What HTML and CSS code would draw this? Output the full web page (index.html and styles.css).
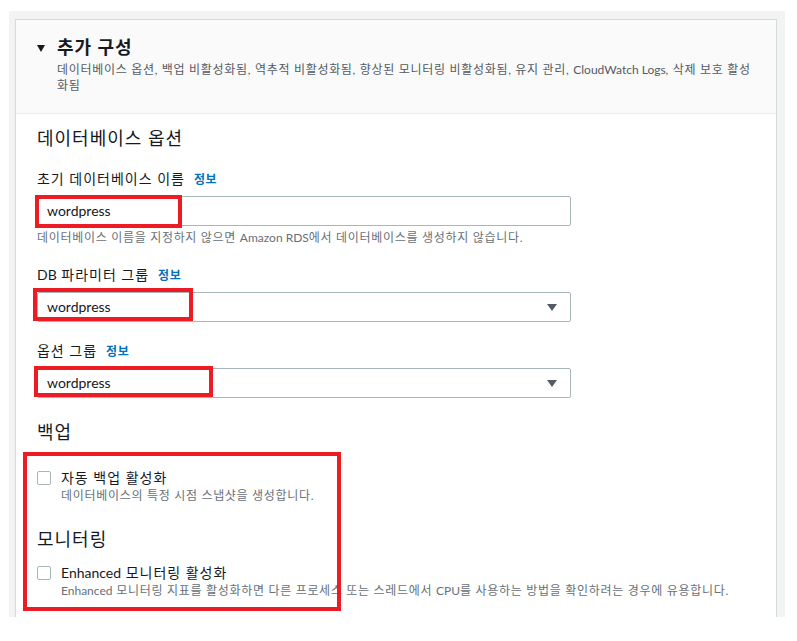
FILE: index.html
```html
<!DOCTYPE html>
<html lang="ko">
<head>
<meta charset="utf-8">
<title>추가 구성</title>
<link rel="stylesheet" href="styles.css">
</head>
<body>
<div class="outer">
  <div class="card">
    <div class="card-header">
      <div class="title-row">
        <span class="caret-down"></span>
        <h2 class="title">추가 구성</h2>
      </div>
      <p class="subtitle">데이터베이스 옵션, 백업 비활성화됨, 역추적 비활성화됨, 향상된 모니터링 비활성화됨, 유지 관리, <span class="en">CloudWatch Logs</span>, 삭제 보호 활성화됨</p>
    </div>
    <div class="card-body">
      <h3 class="section-title">데이터베이스 옵션</h3>

      <div class="field">
        <div class="label">초기 데이터베이스 이름 <a class="info">정보</a></div>
        <div class="control"><span class="en">wordpress</span></div>
        <div class="hint">데이터베이스 이름을 지정하지 않으면 <span class="en">Amazon RDS</span>에서 데이터베이스를 생성하지 않습니다.</div>
      </div>

      <div class="field">
        <div class="label"><span><span class="en">DB</span> 파라미터 그룹</span> <a class="info">정보</a></div>
        <div class="control select"><span class="en">wordpress</span><span class="select-caret"></span></div>
      </div>

      <div class="field">
        <div class="label">옵션 그룹 <a class="info">정보</a></div>
        <div class="control select"><span class="en">wordpress</span><span class="select-caret"></span></div>
      </div>

      <h3 class="section-title backup">백업</h3>
      <div class="check-row">
        <span class="checkbox"></span>
        <div>
          <div class="check-label">자동 백업 활성화</div>
          <div class="hint">데이터베이스의 특정 시점 스냅샷을 생성합니다.</div>
        </div>
      </div>

      <h3 class="section-title monitoring">모니터링</h3>
      <div class="check-row tight">
        <span class="checkbox"></span>
        <div>
          <div class="check-label"><span class="en">Enhanced</span> 모니터링 활성화</div>
          <div class="hint"><span class="en">Enhanced</span> 모니터링 지표를 활성화하면 다른 프로세스 또는 스레드에서 <span class="en">CPU</span>를 사용하는 방법을 확인하려는 경우에 유용합니다.</div>
        </div>
      </div>
    </div>
  </div>
</div>

<div class="mark mark-1"></div>
<div class="mark mark-2"></div>
<div class="mark mark-3"></div>
<div class="mark mark-4"></div>
</body>
</html>
```
FILE: styles.css
```css
* { box-sizing: border-box; }

html, body {
  margin: 0;
  padding: 0;
  background: #ffffff;
}

body {
  position: relative;
  font-family: "Lato", "Noto Sans CJK KR", sans-serif;
  color: #16191f;
  width: 797px;
  height: 641px;
  overflow: hidden;
  letter-spacing: 0.062em;
}

.en {
  letter-spacing: 0;
}

.outer {
  margin: 11px 0 0 9px;
  width: 776px;
  height: 606px;
  background: #f2f3f3;
  padding: 8px 8px 0 6px;
  overflow: hidden;
}

.card {
  background: #ffffff;
  border: 1px solid #d5dbdb;
  border-bottom: none;
  height: 640px;
}

.card-header {
  background: #fafafa;
  border-bottom: 1px solid #eaeded;
  padding: 15px 20px 19px 21px;
}

.title-row {
  display: flex;
  align-items: center;
  gap: 12px;
}

.caret-down {
  width: 0;
  height: 0;
  border-left: 4.5px solid transparent;
  border-right: 4.5px solid transparent;
  border-top: 7px solid #16191f;
  margin-top: 2px;
}

.title {
  margin: 0;
  font-size: 18px;
  line-height: 24px;
  font-weight: 700;
  letter-spacing: 0.055em;
}

.subtitle {
  margin: 3px 0 0 20px;
  font-size: 12px;
  line-height: 16px;
  color: #545b64;
  letter-spacing: 0.058em;
}

.card-body {
  padding: 12px 20px 0 21px;
}

.section-title {
  margin: 0;
  font-size: 18px;
  line-height: 24px;
  font-weight: 400;
}

.field {
  margin-top: 19px;
}

.label {
  font-size: 14px;
  line-height: 20px;
  display: flex;
  align-items: baseline;
  gap: 9px;
}

.info {
  color: #0073bb;
  font-size: 12px;
  font-weight: 700;
  letter-spacing: 0.058em;
}

.control {
  margin-top: 6px;
  width: 534px;
  height: 30px;
  border: 1px solid #aab7b8;
  border-radius: 2px;
  padding: 0 9px;
  font-size: 14px;
  line-height: 28px;
  display: flex;
  align-items: center;
  justify-content: space-between;
}

.select-caret {
  width: 0;
  height: 0;
  border-left: 5px solid transparent;
  border-right: 5px solid transparent;
  border-top: 7px solid #545b64;
  margin-right: 4px;
}

.hint {
  margin-top: 4px;
  font-size: 12px;
  line-height: 16px;
  color: #687078;
  letter-spacing: 0.058em;
}

.check-row .hint {
  margin-top: 0;
}

.section-title.backup {
  margin-top: 22px;
}

.section-title.monitoring {
  margin-top: 23px;
}

.check-row {
  display: flex;
  align-items: flex-start;
  gap: 10px;
  margin-top: 24px;
}

.check-row.tight {
  margin-top: 12px;
}

.checkbox {
  width: 14px;
  height: 14px;
  border: 1px solid #aab7b8;
  border-radius: 2px;
  margin-top: 3px;
  flex: none;
}

.check-label {
  font-size: 14px;
  line-height: 20px;
}

.mark {
  position: absolute;
  border: 4px solid #ed1c24;
}

.mark-1 { left: 35px; top: 195px; width: 147px; height: 33px; }
.mark-2 { left: 33px; top: 288px; width: 160px; height: 33px; }
.mark-3 { left: 34px; top: 366px; width: 179px; height: 31px; }
.mark-4 { left: 23px; top: 452px; width: 318px; height: 159px; }
```
